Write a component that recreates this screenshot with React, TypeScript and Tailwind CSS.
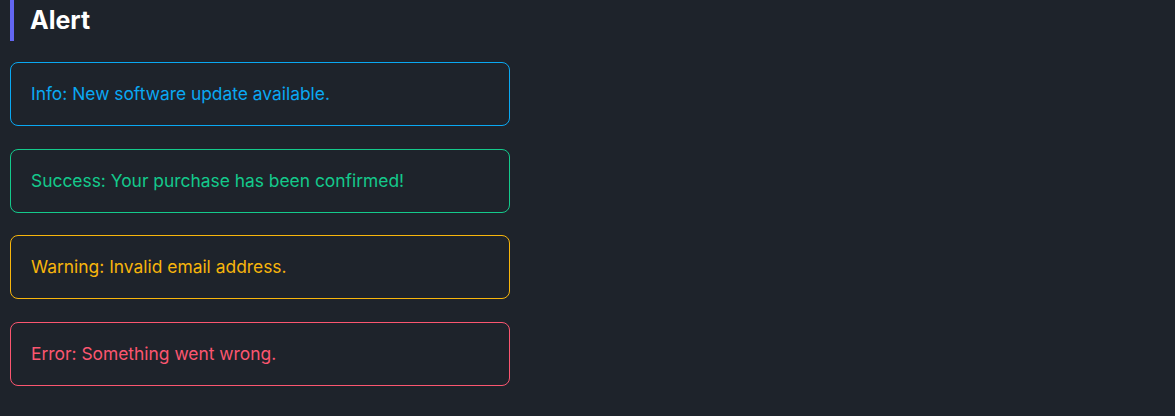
const alerts = [
  { text: 'Info: New software update available.', className: 'border-[#0aa8f2] text-[#0aa8f2]' },
  { text: 'Success: Your purchase has been confirmed!', className: 'border-[#14c98b] text-[#14c98b]' },
  { text: 'Warning: Invalid email address.', className: 'border-[#f7b50c] text-[#f7b50c]' },
  { text: 'Error: Something went wrong.', className: 'border-[#fb5670] text-[#fb5670]' },
]

export default function App() {
  return (
    <div className="min-h-screen bg-[#1e232b] px-[10px] font-['Inter',sans-serif]">
      {/* Header */}
      <h2 className="flex h-[41px] items-center border-l-4 border-[#6366f1] pl-[16px] text-[25px] font-bold text-white">
        Alert
      </h2>

      {/* Alerts */}
      <div className="mt-[21px] flex w-[500px] flex-col gap-[22.6px]">
        {alerts.map((alert) => (
          <div
            key={alert.text}
            className={`rounded-lg border px-5 py-[19px] text-[17.4px] leading-6 ${alert.className}`}
          >
            {alert.text}
          </div>
        ))}
      </div>
    </div>
  )
}
